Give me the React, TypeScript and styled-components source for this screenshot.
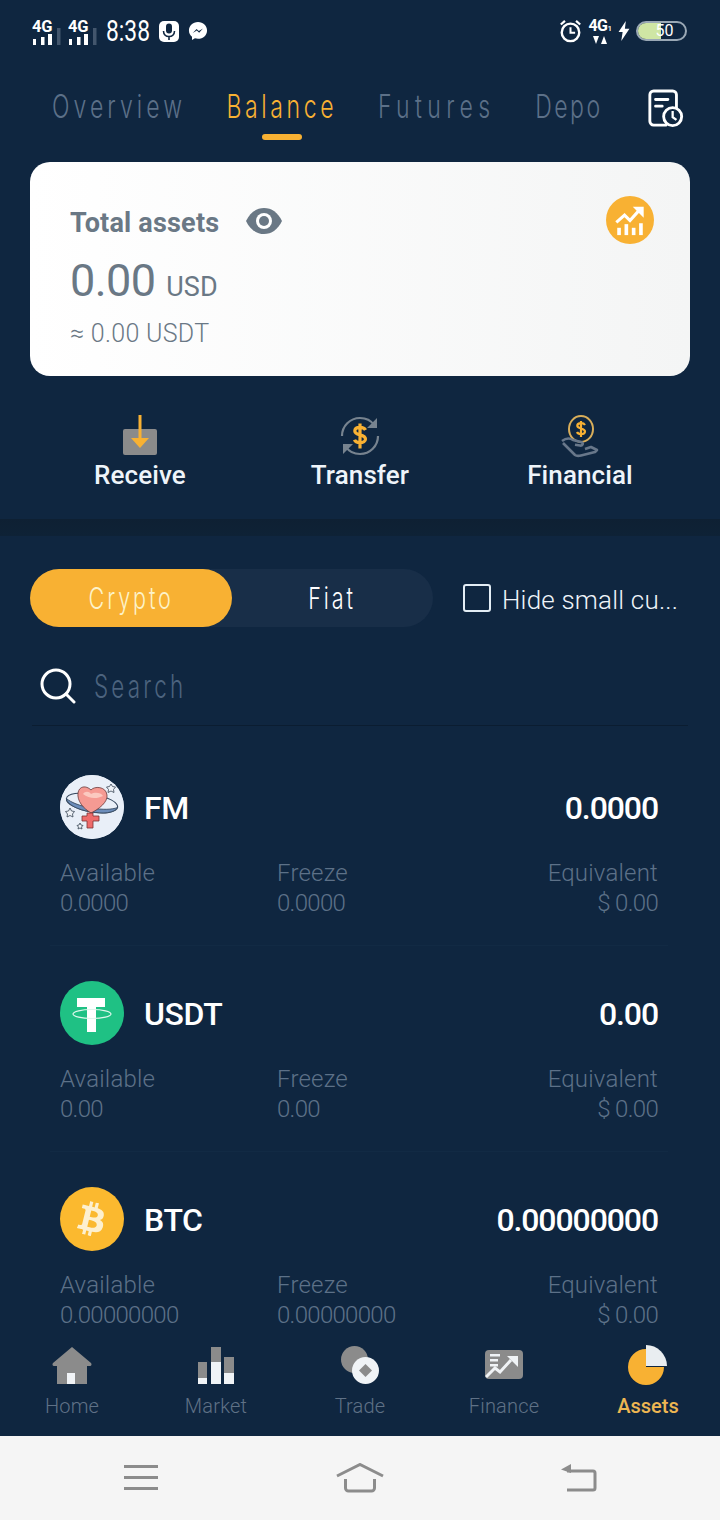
import * as React from 'react';
import styled, { createGlobalStyle } from 'styled-components';
import { FaBtc } from 'react-icons/fa';

const NAVY = '#0f2640';
const GOLD = '#f8b133';
const BODY = '"Roboto", "Liberation Sans", sans-serif';
const THIN = '"Inter", "Roboto", sans-serif';

const GlobalStyle = createGlobalStyle`
  html, body {
    margin: 0;
    padding: 0;
    background: ${NAVY};
  }
  * {
    box-sizing: border-box;
  }
`;

const Root = styled.div`
  width: 720px;
  height: 1520px;
  display: flex;
  flex-direction: column;
  overflow: hidden;
  background: ${NAVY};
  font-family: ${BODY};
  color: #fff;
`;

const StatusBar = styled.div`
  height: 62px;
  flex: none;
  display: flex;
  align-items: center;
  justify-content: space-between;
  padding: 0 33px 0 32px;
`;

const StatusLeft = styled.div`
  display: flex;
  align-items: center;
`;

const StatusRight = styled.div`
  display: flex;
  align-items: center;
  gap: 6px;
`;

const Clock = styled.span`
  width: 42px;
  margin: 0 11px 0 2px;
  font-size: 30px;
  line-height: 30px;
  white-space: nowrap;
  transform: scaleX(0.76);
  transform-origin: left center;
`;

const Messenger = styled.div`
  display: flex;
  margin-left: 9px;
`;

const NetSmall = styled.div`
  width: 24px;
  display: flex;
  flex-direction: column;
  align-items: center;
`;

const NetSmallLabel = styled.span`
  font-size: 16px;
  line-height: 15px;
  font-weight: 700;
  letter-spacing: -0.5px;
  white-space: nowrap;
`;

const NetSub = styled.span`
  font-size: 8px;
  font-weight: 500;
`;

const Battery = styled.div`
  width: 51px;
  height: 20px;
  border: 2px solid #9aa8b5;
  border-radius: 10px;
  position: relative;
  overflow: hidden;
  display: flex;
  align-items: center;
  justify-content: center;
  font-size: 16px;
  line-height: 16px;
`;

const BatteryFill = styled.div`
  position: absolute;
  left: 0;
  top: 0;
  bottom: 0;
  width: 23px;
  background: #cfe6a4;
`;

const BatteryText = styled.span`
  position: relative;
  left: 3px;
`;

const Tabs = styled.div`
  height: 100px;
  flex: none;
  display: flex;
  align-items: flex-start;
  padding: 23px 0 0 53px;
  position: relative;
`;

const Tab = styled.div<{ $active?: boolean; $width: number }>`
  width: ${p => p.$width}px;
  margin-right: 42px;
  display: flex;
  flex-direction: column;
  align-items: center;
  font-family: ${THIN};
  font-weight: 300;
  font-size: 32px;
  line-height: 44px;
  color: ${p => (p.$active ? GOLD : '#5c7088')};
`;

const TabText = styled.span<{ $spacing: number }>`
  display: inline-block;
  white-space: nowrap;
  transform: scaleX(0.72);
  letter-spacing: ${p => p.$spacing}px;
`;

const TabMark = styled.div`
  width: 40px;
  height: 6px;
  margin-top: 5px;
  border-radius: 3px;
  background: ${GOLD};
`;

const HistoryButton = styled.div`
  position: absolute;
  left: 647px;
  top: 27px;
  width: 40px;
  height: 42px;
`;

const Card = styled.div`
  height: 214px;
  flex: none;
  margin: 0 30px;
  padding: 44px 36px 0 40px;
  border-radius: 20px;
  background: linear-gradient(90deg, #ffffff 0%, #f4f5f5 100%);
  color: #6a7885;
  position: relative;
`;

const CardTitle = styled.div`
  display: flex;
  align-items: center;
  gap: 27px;
  height: 34px;
  font-size: 27px;
  font-weight: 700;
  letter-spacing: 0.2px;
`;

const EyeWrap = styled.div`
  display: flex;
  margin-top: -4px;
`;

const Amount = styled.div`
  margin-top: 13px;
  display: flex;
  align-items: baseline;
  gap: 11px;
  font-size: 45px;
  line-height: 56px;
  font-weight: 400;
  letter-spacing: -0.6px;
`;

const AmountUnit = styled.span`
  font-size: 27px;
  font-weight: 400;
  letter-spacing: 0;
`;

const Approx = styled.div`
  margin-top: 4px;
  font-size: 25px;
  line-height: 30px;
  font-weight: 300;
  letter-spacing: 0.3px;
`;

const TrendBadge = styled.div`
  position: absolute;
  right: 36px;
  top: 34px;
  width: 48px;
  height: 48px;
  border-radius: 50%;
  background: ${GOLD};
  display: flex;
  align-items: center;
  justify-content: center;
`;

const Actions = styled.div`
  height: 143px;
  flex: none;
  display: grid;
  grid-template-columns: repeat(3, 1fr);
  padding: 38px 30px 0;
`;

const Action = styled.div`
  display: flex;
  flex-direction: column;
  align-items: center;
  font-size: 26px;
  font-weight: 500;
  line-height: 32px;
  letter-spacing: 0.1px;
  color: #eef4fa;
`;

const ActionIcon = styled.div`
  height: 44px;
  margin-bottom: 1px;
`;

const Divider = styled.div`
  height: 17px;
  flex: none;
  background: linear-gradient(180deg, #0e2033, #0e2236);
`;

const FilterRow = styled.div`
  flex: none;
  display: flex;
  align-items: center;
  margin: 33px 0 0 30px;
  height: 58px;
`;

const Toggle = styled.div`
  width: 403px;
  height: 58px;
  display: flex;
  border-radius: 29px;
  background: #182e48;
`;

const ToggleItem = styled.div<{ $active?: boolean }>`
  width: 202px;
  height: 58px;
  border-radius: 29px;
  display: flex;
  align-items: center;
  justify-content: center;
  font-family: ${THIN};
  font-weight: 300;
  font-size: 30px;
  color: ${p => (p.$active ? '#fdf3c9' : '#fff')};
  background: ${p => (p.$active ? GOLD : 'transparent')};
`;

const ToggleText = styled.span`
  display: inline-block;
  letter-spacing: 4px;
  transform: scaleX(0.72);
`;

const HideOption = styled.div`
  display: flex;
  align-items: center;
  margin-left: 30px;
  gap: 11px;
  font-size: 26px;
  font-weight: 300;
  letter-spacing: 0.2px;
  color: #eef4fa;
`;

const HideLabel = styled.span`
  padding-top: 4px;
`;

const CheckBox = styled.div`
  width: 28px;
  height: 28px;
  border: 2px solid #e3edf5;
  border-radius: 3px;
`;

const SearchRow = styled.div`
  flex: none;
  height: 99px;
  margin: 0 32px;
  padding: 20px 0 0 8px;
  display: flex;
  align-items: center;
  gap: 18px;
  border-bottom: 1px solid #0b1d31;
`;

const SearchText = styled.span`
  display: inline-block;
  font-family: ${THIN};
  font-weight: 300;
  font-size: 32px;
  letter-spacing: 4.6px;
  color: #4c637e;
  transform: scaleX(0.7);
  transform-origin: left center;
`;

const CoinList = styled.div`
  flex: 1;
  min-height: 0;
  overflow: hidden;
  padding-top: 49px;
`;

const CoinRow = styled.div`
  height: 206px;
  padding: 0 62px 0 60px;
`;

const CoinHead = styled.div`
  display: flex;
  align-items: center;
  height: 64px;
  gap: 20px;
  font-size: 32px;
  font-weight: 500;
  letter-spacing: -0.4px;
`;

const CoinName = styled.span`
  padding-top: 1px;
`;

const CoinBadge = styled.div<{ $bg: string }>`
  width: 64px;
  height: 64px;
  flex: none;
  border-radius: 50%;
  background: ${p => p.$bg};
  display: flex;
  align-items: center;
  justify-content: center;
  overflow: hidden;
`;

const BtcGlyph = styled(FaBtc)`
  transform: rotate(14deg);
`;

const CoinValue = styled.span`
  margin-left: auto;
  padding-top: 1px;
  letter-spacing: -1.1px;
`;

const CoinStats = styled.div`
  display: flex;
  margin-top: 19px;
  font-size: 24px;
  line-height: 30px;
  font-weight: 300;
  color: #5d7188;
`;

const Stat = styled.div<{ $width?: number; $right?: boolean }>`
  width: ${p => (p.$width ? `${p.$width}px` : 'auto')};
  flex: ${p => (p.$width ? 'none' : '1')};
  text-align: ${p => (p.$right ? 'right' : 'left')};
`;

const StatLabel = styled.div`
  letter-spacing: 0.2px;
`;

const StatValue = styled.div`
  letter-spacing: -0.7px;
`;

const RowLine = styled.div`
  height: 1px;
  margin: 27px -10px 0;
  background: #122a44;
`;

const TabBar = styled.div`
  flex: none;
  height: 100px;
  display: grid;
  grid-template-columns: repeat(5, 144px);
  background: ${NAVY};
  padding-top: 9px;
`;

const TabBarItem = styled.div<{ $active?: boolean }>`
  display: flex;
  flex-direction: column;
  align-items: center;
  font-size: 20px;
  line-height: 26px;
  letter-spacing: ${p => (p.$active ? '0' : '0.2px')};
  font-weight: ${p => (p.$active ? 500 : 300)};
  color: ${p => (p.$active ? '#edb652' : '#5f7186')};
`;

const TabBarIcon = styled.div`
  height: 40px;
  margin-bottom: 8px;
  display: flex;
  align-items: center;
`;

const SystemNav = styled.div`
  flex: none;
  height: 84px;
  display: grid;
  grid-template-columns: repeat(3, 219px);
  justify-content: center;
  align-items: center;
  justify-items: center;
  background: #f5f5f5;
`;

const coins = [
  { name: 'FM', value: '0.0000', small: '0.0000', icon: 'fm' },
  { name: 'USDT', value: '0.00', small: '0.00', icon: 'usdt' },
  { name: 'BTC', value: '0.00000000', small: '0.00000000', icon: 'btc' },
];

const SignalIcon = () => (
  <svg width="36" height="27" viewBox="0 0 36 27">
    <text x="0" y="14" fontFamily="Roboto, sans-serif" fontSize="16.500" fontWeight="700" letterSpacing="-0.3" fill="#fff">
      4G
    </text>
    <rect x="1" y="21" width="3" height="6" fill="#fff" />
    <rect x="9" y="19" width="3.500" height="8" fill="#fff" />
    <rect x="16" y="16" width="4" height="11" fill="#fff" />
    <rect x="25" y="10" width="3.500" height="17" fill="#43566d" />
  </svg>
);

const MicIcon = () => (
  <svg width="20" height="21" viewBox="0 0 20 21">
    <rect width="20" height="21" rx="5" fill="#fff" />
    <rect x="7" y="2.500" width="6" height="10" rx="3" fill={NAVY} />
    <path d="M4.500 10c0 3.500 2.500 5.500 5.500 5.500s5.500-2 5.500-5.500M10 15.500V19" fill="none" stroke={NAVY} strokeWidth="1.600" />
  </svg>
);

const MessengerIcon = () => (
  <svg width="20" height="20" viewBox="0 0 21 21">
    <path d="M10.500 1C5 1 1 4.900 1 9.900c0 2.800 1.200 5 3.200 6.600V20l3.100-1.800c1 .3 2.100.5 3.200.5 5.500 0 9.500-3.900 9.500-8.800S16 1 10.500 1z" fill="#fff" />
    <path d="M5 12.500l4-4.200 2.400 2.200 4.300-2.500-4 4.300-2.400-2.200z" fill={NAVY} />
  </svg>
);

const AlarmIcon = () => (
  <svg width="23" height="24" viewBox="0 0 24 26" fill="none" stroke="#fff">
    <circle cx="12" cy="14.500" r="9.500" strokeWidth="2.600" />
    <path d="M12 9v6h5" strokeWidth="2.200" />
    <path d="M1.500 6L6 2M22.500 6L18 2" strokeWidth="2.400" />
  </svg>
);

const BoltIcon = () => (
  <svg width="12" height="20" viewBox="0 0 12 22">
    <path d="M8 0L0 12h4.500L3 22l9-13.500H7z" fill="#fff" />
  </svg>
);

const HistoryIcon = () => (
  <svg width="38" height="40" viewBox="0 0 40 42" fill="none" stroke="#fff" strokeWidth="3">
    <path d="M20 38H7a4 4 0 0 1-4-4V6a4 4 0 0 1 4-4h20a4 4 0 0 1 4 4v14" strokeLinecap="round" />
    <path d="M9 11h13M9 18h7" strokeLinecap="round" />
    <circle cx="27" cy="29" r="9.500" />
    <path d="M27 23v6.500l4 3" strokeWidth="2.400" />
  </svg>
);

const EyeIcon = () => (
  <svg width="36" height="26" viewBox="0 0 36 26">
    <path d="M0 13C4 4.500 10.500 0 18 0s14 4.500 18 13c-4 8.500-10.500 13-18 13S4 21.500 0 13z" fill="#6a7885" />
    <circle cx="18" cy="13" r="8" fill="#fff" />
    <circle cx="18" cy="13" r="5" fill="#6a7885" />
  </svg>
);

const TrendIcon = () => (
  <svg width="30" height="31" viewBox="0 0 32 34" fill="#fff">
    <path d="M1 19l9-8 6 6 9-10" fill="none" stroke="#fff" strokeWidth="3.400" />
    <path d="M19 2h12v12z" />
    <rect x="2" y="25" width="4" height="8" />
    <rect x="10" y="21" width="4" height="12" />
    <rect x="18" y="25" width="4" height="8" />
    <rect x="26" y="20" width="4" height="13" />
  </svg>
);

const ReceiveIcon = () => (
  <svg width="36" height="42" viewBox="0 0 36 42">
    <rect x="1" y="15" width="34" height="26" rx="2" fill="#8b8b8b" />
    <path d="M16.500 1h3v26h-3z" fill={GOLD} />
    <path d="M9 24h18l-9 10z" fill={GOLD} />
  </svg>
);

const TransferIcon = () => (
  <svg width="40" height="44" viewBox="0 0 40 44" fill="none">
    <path d="M2 22C2 12 10 4 20 4c6 0 11 2.500 14 7M38 22c0 10-8 18-18 18-6 0-11-2.500-14-7" stroke="#77838f" strokeWidth="2.200" />
    <path d="M37 4v10H27zM3 40V30h10z" fill="#77838f" />
    <path d="M25.500 16c-.8-1.800-2.500-2.600-5.500-2.600-3.200 0-5.200 1.500-5.200 3.700 0 5 10.700 2.600 10.700 8 0 2.100-2.300 3.600-5.500 3.600-3 0-4.800-.9-5.500-2.900M20 9.500v25" stroke={GOLD} strokeWidth="3.200" />
  </svg>
);

const FinancialIcon = () => (
  <svg width="38" height="44" viewBox="0 0 38 44" fill="none">
    <ellipse cx="20" cy="15" rx="12" ry="13" stroke="#d9ae5a" strokeWidth="2" />
    <path d="M24 11c-.7-1.200-2-1.800-4-1.800-2.300 0-3.700 1.100-3.700 2.600 0 3.400 7.700 2 7.700 5.600 0 1.400-1.700 2.600-4 2.600-2 0-3.400-.6-4-2M20 7v16" stroke={GOLD} strokeWidth="2.200" />
    <path d="M1 27c4-3 8-3 11-1l8 2c3 .8 2 4-1 3.500l-5-.8M2 29l12 12c2 1.500 4 1 6 .5l14-3.500 2-2-6-3-6 2" stroke="#68778a" strokeWidth="2.600" strokeLinejoin="round" />
  </svg>
);

const SearchIcon = () => (
  <svg width="36" height="36" viewBox="0 0 36 36" fill="none" stroke="#fff" strokeWidth="3">
    <circle cx="16" cy="16" r="14" />
    <path d="M26 26l8 8" strokeLinecap="round" />
  </svg>
);

const FmIcon = () => (
  <svg width="64" height="64" viewBox="0 0 64 64">
    <circle cx="32" cy="32" r="32" fill="#e9eff8" />
    <g transform="rotate(10 32 28)">
      <ellipse cx="32" cy="28" rx="26" ry="9" fill="none" stroke="#36485e" strokeWidth="1" />
      <path d="M6 28c2 6 13 9 26 9s24-3 26-9c-5 3-14 5-26 5S11 31 6 28z" fill="#6c8dbb" stroke="#36485e" strokeWidth="0.800" />
    </g>
    <path d="M31 38C23 33 17 26 18 18c1-7 8-8 13-3 3-4 15-4 16 5 1 7-8 14-16 18z" fill="#f59a93" stroke="#6b3a3a" strokeWidth="0.800" />
    <path d="M23 19c2-3 6-3 8 0 3-2 10-2 12 2-6 3-14 3-20-2z" fill="#fbc9c0" />
    <path d="M27 38h6v3h6v5h-6v7h-6v-7h-5v-5h5z" fill="#ee6b6b" stroke="#7c3434" strokeWidth="0.800" />
    <path d="M51 9l1.500 2.500 3 .5-2 2.500.5 3-3-1.500-3 1.500.5-3-2-2.500 3-.5zM10 33l1.500 3 3 .5-2 2.500.5 3-3-1.500-3 1.500.5-3-2-2.500 3-.5zM20 48l1 2 2 .5-1.500 1.500.5 2-2-1-2 1 .5-2-1.500-1.500 2-.5z" fill="#eef1f6" stroke="#3a4656" strokeWidth="0.800" />
  </svg>
);

const UsdtIcon = () => (
  <svg width="64" height="64" viewBox="0 0 64 64">
    <path d="M17 17h28v9H36v25h-9V26H17z" fill="#fff" />
    <ellipse cx="32" cy="33" rx="19" ry="4.500" fill="none" stroke="#dff7ec" strokeWidth="1.200" />
  </svg>
);

const HomeIcon = () => (
  <svg width="40" height="37" viewBox="0 0 40 37">
    <path d="M20 0l19 16c1 1 .5 3-1 3h-3v18H5V19H2c-1.500 0-2-2-1-3z" fill="#8b8b8b" />
    <rect x="15" y="26" width="8" height="11" fill="#f0f3f6" />
  </svg>
);

const MarketIcon = () => (
  <svg width="36" height="37" viewBox="0 0 36 37">
    <rect x="0" y="15" width="9" height="16" fill="#8b8b8b" />
    <rect x="0" y="31" width="9" height="6" fill="#f0f3f6" />
    <rect x="13" y="0" width="10" height="15" fill="#8b8b8b" />
    <rect x="13" y="15" width="10" height="22" fill="#f0f3f6" />
    <rect x="26" y="10" width="10" height="16" fill="#8b8b8b" />
    <rect x="26" y="26" width="10" height="11" fill="#f0f3f6" />
  </svg>
);

const TradeIcon = () => (
  <svg width="38" height="38" viewBox="0 0 38 38">
    <circle cx="13.500" cy="13.500" r="13.500" fill="#8b8b8b" />
    <circle cx="24.500" cy="24.500" r="13.500" fill="#f0f3f6" />
    <path d="M24.500 18l6.500 6.500-6.500 6.500-6.500-6.500z" fill="#8b8b8b" />
  </svg>
);

const FinanceIcon = () => (
  <svg width="38" height="30" viewBox="0 0 38 30">
    <rect width="38" height="29" rx="4" fill="#8b8b8b" />
    <path d="M5 4h10v2.500H5zM5 9h8v2.500H5zM5 14h8v2.500H5z" fill="#f0f3f6" />
    <path d="M1 27l9-9 5 4 11-12" fill="none" stroke="#f0f3f6" strokeWidth="3" />
    <path d="M22 6h11v11z" fill="#f0f3f6" />
  </svg>
);

const AssetsIcon = () => (
  <svg width="40" height="40" viewBox="0 0 40 40">
    <path d="M18 4v18h18a18 18 0 1 1-18-18z" fill={GOLD} />
    <path d="M18 0a21 21 0 0 1 21 21H18z" fill="#e9edf0" />
  </svg>
);

const MenuIcon = () => (
  <svg width="34" height="26" viewBox="0 0 34 26" fill="#8c8c8c">
    <rect y="0" width="34" height="3" />
    <rect y="11" width="34" height="3" />
    <rect y="22" width="34" height="3" />
  </svg>
);

const SysHomeIcon = () => (
  <svg width="48" height="30" viewBox="0 0 48 30" fill="none" stroke="#8c8c8c" strokeWidth="3">
    <path d="M1 13L24 1.500 47 13" />
    <path d="M9.500 16v9a3 3 0 0 0 3 3h23a3 3 0 0 0 3-3v-9" />
  </svg>
);

const BackIcon = () => (
  <svg width="36" height="28" viewBox="0 0 36 28">
    <path d="M6 7h26a2 2 0 0 1 2 2v15a2 2 0 0 1-2 2H6" fill="none" stroke="#8c8c8c" strokeWidth="3" />
    <path d="M0 5.500L10 0v9z" fill="#8c8c8c" />
  </svg>
);

const CoinIcon = ({ icon }: { icon: string }) => {
  if (icon === 'fm') {
    return (
      <CoinBadge $bg="#e9eff8">
        <FmIcon />
      </CoinBadge>
    );
  }
  if (icon === 'usdt') {
    return (
      <CoinBadge $bg="#1fc184">
        <UsdtIcon />
      </CoinBadge>
    );
  }
  return (
    <CoinBadge $bg="#fbb92f">
      <BtcGlyph size={34} color="#fdf0d0" />
    </CoinBadge>
  );
};

export default function App() {
  return (
    <Root>
      <GlobalStyle />
      <StatusBar>
        <StatusLeft>
          <SignalIcon />
          <SignalIcon />
          <Clock>8:38</Clock>
          <MicIcon />
          <Messenger>
            <MessengerIcon />
          </Messenger>
        </StatusLeft>
        <StatusRight>
          <AlarmIcon />
          <NetSmall>
            <NetSmallLabel>
              4G<NetSub>1</NetSub>
            </NetSmallLabel>
            <svg width="14" height="8" viewBox="0 0 14 8" fill="#fff">
              <path d="M0 0h6L3 8zM11 0l3 8H8z" />
            </svg>
          </NetSmall>
          <BoltIcon />
          <Battery>
            <BatteryFill />
            <BatteryText>50</BatteryText>
          </Battery>
        </StatusRight>
      </StatusBar>

      <Tabs>
        <Tab $width={132}>
          <TabText $spacing={5.600}>Overview</TabText>
        </Tab>
        <Tab $width={110} $active>
          <TabText $spacing={5}>Balance</TabText>
          <TabMark />
        </Tab>
        <Tab $width={116}>
          <TabText $spacing={7.500}>Futures</TabText>
        </Tab>
        <Tab $width={64}>
          <TabText $spacing={3.500}>Depo</TabText>
        </Tab>
        <HistoryButton>
          <HistoryIcon />
        </HistoryButton>
      </Tabs>

      <Card>
        <CardTitle>
          Total assets
          <EyeWrap>
            <EyeIcon />
          </EyeWrap>
        </CardTitle>
        <Amount>
          0.00 <AmountUnit>USD</AmountUnit>
        </Amount>
        <Approx>≈ 0.00 USDT</Approx>
        <TrendBadge>
          <TrendIcon />
        </TrendBadge>
      </Card>

      <Actions>
        <Action>
          <ActionIcon>
            <ReceiveIcon />
          </ActionIcon>
          Receive
        </Action>
        <Action>
          <ActionIcon>
            <TransferIcon />
          </ActionIcon>
          Transfer
        </Action>
        <Action>
          <ActionIcon>
            <FinancialIcon />
          </ActionIcon>
          Financial
        </Action>
      </Actions>

      <Divider />

      <FilterRow>
        <Toggle>
          <ToggleItem $active>
            <ToggleText>Crypto</ToggleText>
          </ToggleItem>
          <ToggleItem>
            <ToggleText>Fiat</ToggleText>
          </ToggleItem>
        </Toggle>
        <HideOption>
          <CheckBox />
          <HideLabel>Hide small cu...</HideLabel>
        </HideOption>
      </FilterRow>

      <SearchRow>
        <SearchIcon />
        <SearchText>Search</SearchText>
      </SearchRow>

      <CoinList>
        {coins.map(coin => (
          <CoinRow key={coin.name}>
            <CoinHead>
              <CoinIcon icon={coin.icon} />
              <CoinName>{coin.name}</CoinName>
              <CoinValue>{coin.value}</CoinValue>
            </CoinHead>
            <CoinStats>
              <Stat $width={217}>
                <StatLabel>Available</StatLabel>
                <StatValue>{coin.small}</StatValue>
              </Stat>
              <Stat>
                <StatLabel>Freeze</StatLabel>
                <StatValue>{coin.small}</StatValue>
              </Stat>
              <Stat $right>
                <StatLabel>Equivalent</StatLabel>
                <StatValue>$ 0.00</StatValue>
              </Stat>
            </CoinStats>
            <RowLine />
          </CoinRow>
        ))}
      </CoinList>

      <TabBar>
        <TabBarItem>
          <TabBarIcon>
            <HomeIcon />
          </TabBarIcon>
          Home
        </TabBarItem>
        <TabBarItem>
          <TabBarIcon>
            <MarketIcon />
          </TabBarIcon>
          Market
        </TabBarItem>
        <TabBarItem>
          <TabBarIcon>
            <TradeIcon />
          </TabBarIcon>
          Trade
        </TabBarItem>
        <TabBarItem>
          <TabBarIcon>
            <FinanceIcon />
          </TabBarIcon>
          Finance
        </TabBarItem>
        <TabBarItem $active>
          <TabBarIcon>
            <AssetsIcon />
          </TabBarIcon>
          Assets
        </TabBarItem>
      </TabBar>

      <SystemNav>
        <MenuIcon />
        <SysHomeIcon />
        <BackIcon />
      </SystemNav>
    </Root>
  );
}
